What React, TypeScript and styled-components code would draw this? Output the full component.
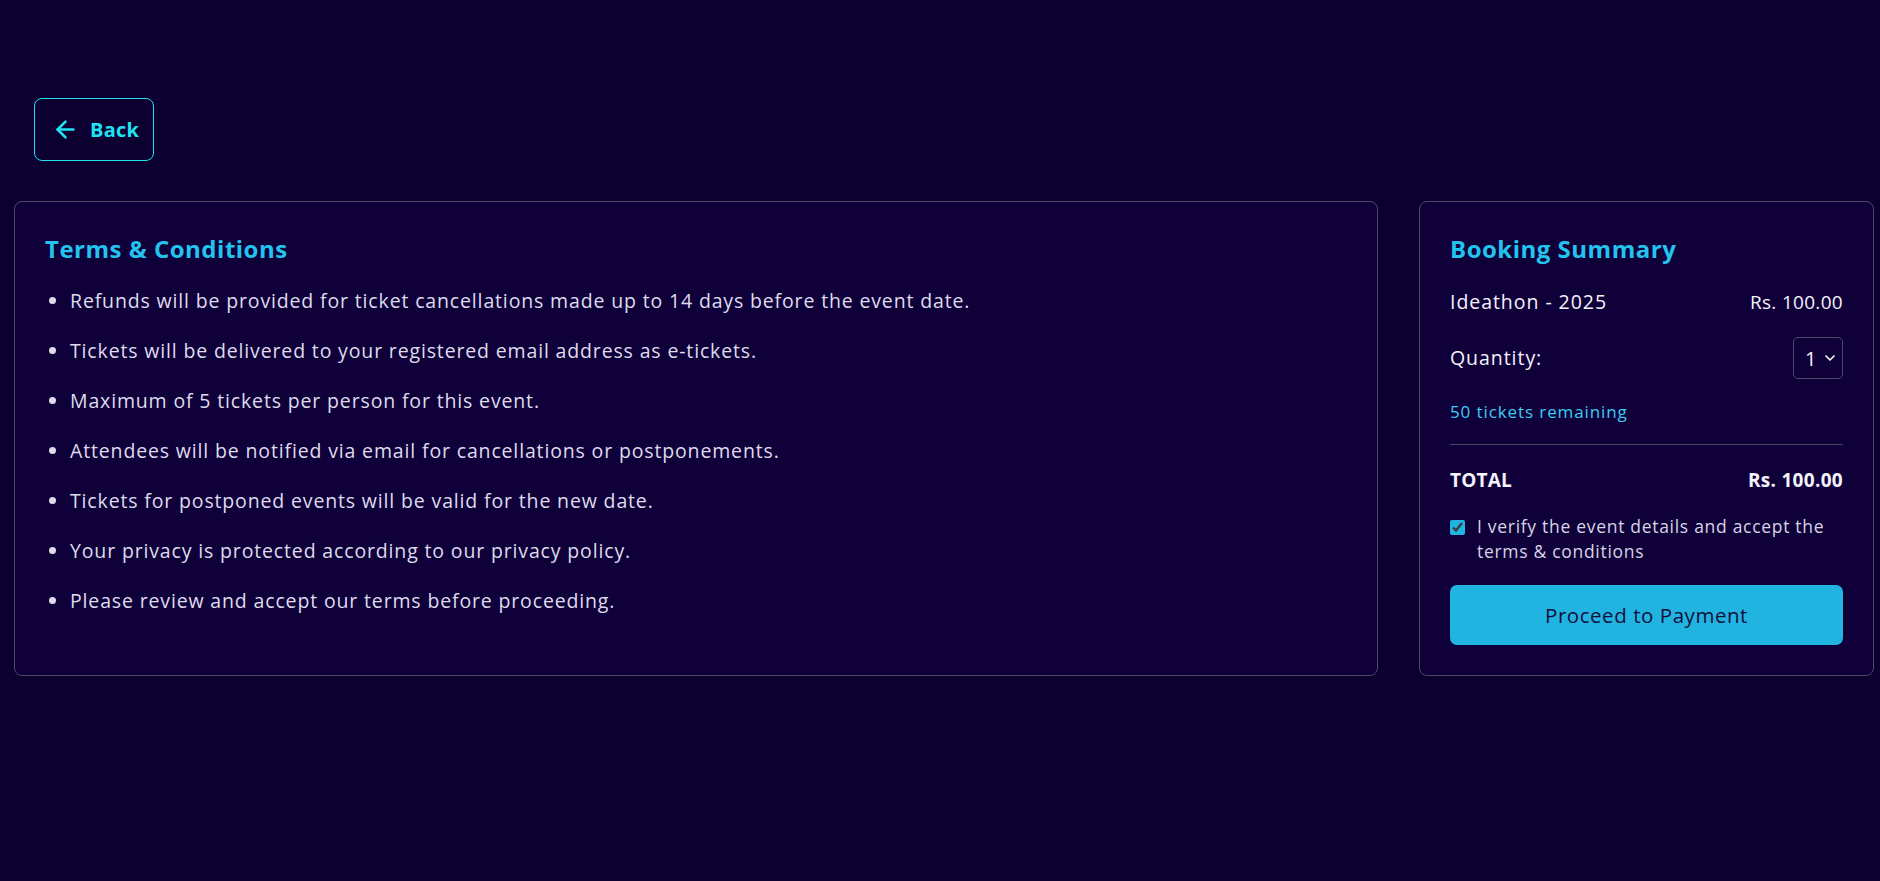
import React, { useState } from 'react';
import styled, { createGlobalStyle } from 'styled-components';
import { ArrowLeft, ChevronDown } from 'lucide-react';

const GlobalStyle = createGlobalStyle`
  html, body {
    margin: 0;
    padding: 0;
    background: #0b0030;
  }
  body {
    font-family: "Open Sans", "Noto Sans", sans-serif;
    color: #ffffff;
  }
  * {
    box-sizing: border-box;
  }
`;

const Page = styled.div`
  min-height: 881px;
  padding: 98px 6px 0 14px;
`;

const BackRow = styled.div`
  padding-left: 20px;
  margin-bottom: 40px;
`;

const BackButton = styled.button`
  display: flex;
  align-items: center;
  gap: 11px;
  height: 63px;
  padding: 0 14px 0 17px;
  background: transparent;
  border: 1.5px solid #1fe3f0;
  border-radius: 8px;
  color: #1fe3f0;
  font-family: inherit;
  font-size: 20px;
  font-weight: 700;
  letter-spacing: 0.2px;
  cursor: pointer;
`;

const Layout = styled.div`
  display: grid;
  grid-template-columns: 1fr 455px;
  gap: 41px;
  align-items: stretch;
`;

const Card = styled.section`
  background: #10003a;
  border: 1px solid #4b4868;
  border-radius: 8px;
  padding: 30px;
`;

const CardTitle = styled.h2`
  margin: 0;
  font-size: 24px;
  line-height: 34px;
  font-weight: 700;
  color: #22c4ee;
  letter-spacing: 0.5px;
`;

const TermsList = styled.ul`
  margin: 21px 0 0;
  padding-left: 25px;
`;

const TermItem = styled.li`
  font-size: 19.5px;
  line-height: 28px;
  letter-spacing: 0.85px;
  color: #dedcec;
  margin-bottom: 22px;
  &::marker {
    color: #dedcec;
  }
`;

const SummaryRow = styled.div<{ $gap?: number }>`
  display: flex;
  justify-content: space-between;
  align-items: center;
  margin-top: ${(p) => p.$gap ?? 21}px;
`;

const RowLabel = styled.span<{ $bold?: boolean }>`
  font-size: ${(p) => (p.$bold ? 19 : 19.5)}px;
  line-height: 28px;
  letter-spacing: ${(p) => (p.$bold ? 0.2 : 0.95)}px;
  font-weight: ${(p) => (p.$bold ? 700 : 400)};
  color: #f4f2fa;
`;

const Amount = styled.span<{ $bold?: boolean }>`
  font-size: 19px;
  line-height: 28px;
  letter-spacing: 0.3px;
  font-weight: ${(p) => (p.$bold ? 700 : 400)};
  color: #f4f2fa;
`;

const QtyBox = styled.div`
  display: flex;
  align-items: center;
  justify-content: space-between;
  width: 50px;
  height: 42px;
  padding: 0 4px 0 11px;
  border: 1px solid #4b4868;
  border-radius: 5px;
  font-size: 20px;
  color: #f4f2fa;
  cursor: pointer;
`;

const Remaining = styled.div`
  margin-top: 21px;
  font-size: 17px;
  line-height: 24px;
  letter-spacing: 0.9px;
  color: #3ccdf0;
`;

const Divider = styled.hr`
  margin: 20px 0 0;
  border: none;
  border-top: 1px solid #46445f;
`;

const VerifyLabel = styled.label`
  display: flex;
  align-items: flex-start;
  gap: 12px;
  margin-top: 20px;
  font-size: 17.5px;
  line-height: 25px;
  letter-spacing: 0.7px;
  color: #d6d4e4;
  cursor: pointer;
`;

const Check = styled.input`
  flex: none;
  width: 15px;
  height: 15px;
  margin: 6px 0 0;
  accent-color: #22b4e0;
`;

const PayButton = styled.button`
  width: 100%;
  height: 60px;
  margin-top: 21px;
  border: none;
  border-radius: 7px;
  background: #22b4e0;
  color: #120f3c;
  font-family: inherit;
  font-size: 20.5px;
  font-weight: 500;
  letter-spacing: 0.55px;
  cursor: pointer;
`;

const terms = [
  'Refunds will be provided for ticket cancellations made up to 14 days before the event date.',
  'Tickets will be delivered to your registered email address as e-tickets.',
  'Maximum of 5 tickets per person for this event.',
  'Attendees will be notified via email for cancellations or postponements.',
  'Tickets for postponed events will be valid for the new date.',
  'Your privacy is protected according to our privacy policy.',
  'Please review and accept our terms before proceeding.',
];

export default function App() {
  const [accepted, setAccepted] = useState(true);
  const quantity = 1;
  const price = 100;

  return (
    <>
      <GlobalStyle />
      <Page>
        <BackRow>
          <BackButton>
            <ArrowLeft size={27} strokeWidth={2.3} />
            Back
          </BackButton>
        </BackRow>
        <Layout>
          <Card>
            <CardTitle>Terms &amp; Conditions</CardTitle>
            <TermsList>
              {terms.map((t) => (
                <TermItem key={t}>{t}</TermItem>
              ))}
            </TermsList>
          </Card>
          <Card>
            <CardTitle>Booking Summary</CardTitle>
            <SummaryRow $gap={22}>
              <RowLabel>Ideathon - 2025</RowLabel>
              <Amount>Rs. {price.toFixed(2)}</Amount>
            </SummaryRow>
            <SummaryRow>
              <RowLabel>Quantity:</RowLabel>
              <QtyBox>
                {quantity}
                <ChevronDown size={16} strokeWidth={2.6} />
              </QtyBox>
            </SummaryRow>
            <Remaining>50 tickets remaining</Remaining>
            <Divider />
            <SummaryRow>
              <RowLabel $bold>TOTAL</RowLabel>
              <Amount $bold>Rs. {(price * quantity).toFixed(2)}</Amount>
            </SummaryRow>
            <VerifyLabel>
              <Check
                type="checkbox"
                checked={accepted}
                onChange={(e) => setAccepted(e.target.checked)}
              />
              I verify the event details and accept the terms &amp; conditions
            </VerifyLabel>
            <PayButton>Proceed to Payment</PayButton>
          </Card>
        </Layout>
      </Page>
    </>
  );
}
